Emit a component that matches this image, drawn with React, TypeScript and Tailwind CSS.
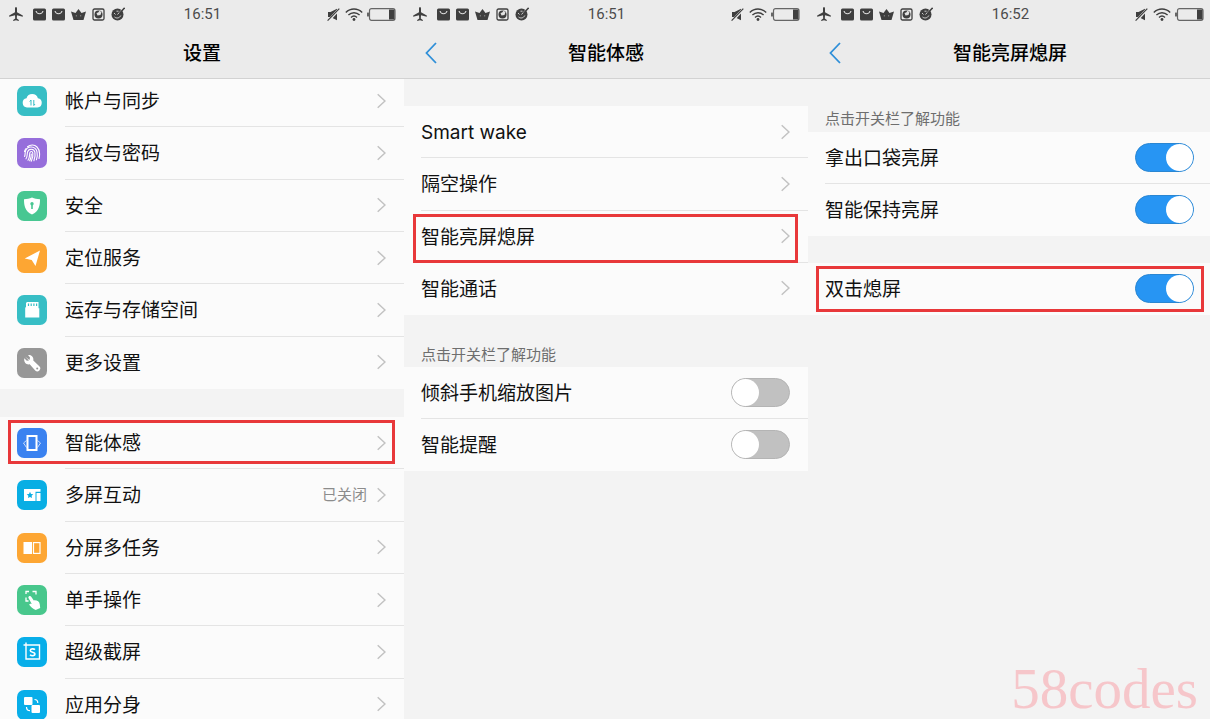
import { useId, useState, type ReactNode } from "react";
import clsx from "clsx";

/* ---------- status bar ---------- */

function BagIcon() {
  return (
    <svg className="size-[13px]" viewBox="0 0 13 13" fill="none">
      <rect x="0" y="0.5" width="13" height="12" rx="1.5" fill="#3f3f3f" />
      <path d="M3 3c.8 3.600 6.200 3.600 7 0" stroke="#ddd" strokeWidth="1.1" />
    </svg>
  );
}

function StatusBar({ time }: { time: string }) {
  return (
    <div className="grid h-7 grid-cols-[1fr_auto_1fr] items-center pr-2 pl-[9px]">
      <div className="flex items-center gap-1.5">
        <svg className="mr-1 size-3.5" viewBox="0 0 14 14" fill="#3f3f3f">
          <path d="M7 0c.7 0 1 .8 1 1.800v3.400l5.800 3.300v1.300L8 8.300l-.2 3.300 2 1.400v.9L7 13.200l-2.800.7V13l2-1.400L6 8.300.2 9.800V8.500L6 5.200V1.800C6 .8 6.300 0 7 0Z" />
        </svg>
        <BagIcon />
        <BagIcon />
        <svg className="h-[13px] w-[15px]" viewBox="0 0 15 13" fill="#3f3f3f">
          <path d="M0 3.500 4.500 5 7.500 1 10.500 5 15 3.500 12.500 12H2.500Z" />
          <path d="M5.300 7v1.500M9.700 7v1.500" stroke="#999" strokeWidth="0.8" />
        </svg>
        <svg className="size-[13px]" viewBox="0 0 13 13">
          <rect x="1" y="1" width="11" height="11" rx="1.500" fill="none" stroke="#3f3f3f" strokeWidth="1.300" />
          <circle cx="6.500" cy="6.500" r="4" fill="#3f3f3f" />
          <path d="M4.500 5 6.200 4.500 7.500 2.800 9.500 4 8.500 7 5.500 7.500Z" fill="#e2e2e2" />
        </svg>
        <svg className="size-3.5" viewBox="0 0 14 14" fill="none">
          <circle cx="6.500" cy="7.500" r="6" fill="#3f3f3f" />
          <path d="M11.500 2 6.500 7.500M3 6l1.500 1.500M3.500 10c2 1.700 5 1.200 6.300-1.500M5.500 4.200h2" stroke="#ddd" strokeWidth="0.900" />
          <path d="M13.600.8 8.500 6.500" stroke="#3f3f3f" strokeWidth="1.400" />
        </svg>
      </div>
      <time className="font-[Roboto,sans-serif] text-[15px] leading-5 text-[#4c4c4c]">{time}</time>
      <div className="flex items-center justify-end gap-1">
        <svg className="mr-px size-[13px]" viewBox="0 0 13 13">
          <path d="M1 4h2.500L10 .8v11.400L3.500 9H1Z" fill="#3f3f3f" />
          <path d="M1.200 13 12.500.8" stroke="#ebebeb" strokeWidth="2.600" />
          <path d="M.6 12.600 12.300.6" stroke="#3f3f3f" strokeWidth="1.200" />
        </svg>
        <svg className="h-[13px] w-[18px]" viewBox="0 0 18 13" fill="none" stroke="#3f3f3f" strokeWidth="1.400">
          <path d="M.8 4.500c4.700-4.600 11.700-4.600 16.400 0M3.400 7c3.300-3.100 7.900-3.100 11.200 0M6 9.500c1.700-1.600 4.300-1.600 6 0" />
          <circle cx="9" cy="11.500" r="1.400" fill="#3f3f3f" stroke="none" />
        </svg>
        <svg className="h-[13px] w-[29px]" viewBox="0 0 29 13">
          <rect x="2.500" y="0.700" width="25.500" height="11.600" rx="2" fill="none" stroke="#666" strokeWidth="1.200" />
          <rect x="0" y="4.500" width="2" height="4" rx="0.500" fill="#666" />
          <rect x="22" y="1.500" width="5.500" height="10" fill="#3f3f3f" />
        </svg>
      </div>
    </div>
  );
}

function Header({ title, time, back }: { title: string; time: string; back?: boolean }) {
  return (
    <header className="z-10 shrink-0 border-b border-[#d2d2d2] bg-[#ebebeb]">
      <StatusBar time={time} />
      <div className="grid h-[50px] grid-cols-[1fr_auto_1fr] items-center">
        <div className="flex pl-5">
          {back && (
            <button type="button" aria-label="返回" className="px-px">
              <svg className="h-[22px] w-3" viewBox="0 0 12 22" fill="none" stroke="#2f8fd8" strokeWidth="1.800">
                <path d="M11 1 1.500 11 11 21" />
              </svg>
            </button>
          )}
        </div>
        <h1 className="pt-0.5 text-[19px] leading-7 font-medium text-black">{title}</h1>
      </div>
    </header>
  );
}

/* ---------- list pieces ---------- */

function Chevron() {
  return (
    <svg className="h-4 w-[9px] shrink-0" viewBox="0 0 9 16" fill="none" stroke="#c2c2c2" strokeWidth="1.500">
      <path d="M.7 1.200 8 8 .7 14.800" />
    </svg>
  );
}

function Marker({ className }: { className: string }) {
  return <span className={clsx("pointer-events-none absolute z-10 border-3 border-[#e8383a]", className)} />;
}

interface RowProps {
  label: string;
  icon?: ReactNode;
  iconBg?: string;
  value?: string;
  marker?: string;
}

const rowClass = "group relative flex min-h-[52px] bg-[#fbfbfb] pl-[17px]";
const lineClass =
  "flex flex-1 items-center justify-between border-b border-[#e4e4e4] pr-[18px] text-left text-[19px] leading-7 text-[#111] group-last:border-transparent";

function LinkRow({ label, icon, iconBg, value, marker }: RowProps) {
  return (
    <li className={rowClass}>
      <button type="button" className="flex flex-1 items-stretch">
        {icon && (
          <span className={clsx("mr-[18px] flex size-[30px] items-center justify-center self-center rounded-[7px] text-white", iconBg)}>
            {icon}
          </span>
        )}
        <span className={lineClass}>
          <span className="pt-[3px]">{label}</span>
          <span className="flex items-center gap-2.5 text-[15px] text-[#8c8c8c]">
            {value}
            <Chevron />
          </span>
        </span>
      </button>
      {marker && <Marker className={marker} />}
    </li>
  );
}

function ToggleRow({ label, on = false, marker }: { label: string; on?: boolean; marker?: string }) {
  const id = useId();
  const [checked, setChecked] = useState(on);

  return (
    <li className={rowClass}>
      <div className={lineClass}>
        <label htmlFor={id} className="pt-[3px]">
          {label}
        </label>
        <input
          id={id}
          type="checkbox"
          role="switch"
          checked={checked}
          onChange={(e) => setChecked(e.target.checked)}
          className="flex h-[29px] w-[59px] appearance-none rounded-full border border-[#b4b4b4] bg-[#c1c1c1] before:size-[27px] before:rounded-full before:bg-white checked:justify-end checked:border-[#2a86d2] checked:bg-[#2795f3]"
        />
      </div>
      {marker && <Marker className={marker} />}
    </li>
  );
}

function SectionLabel({ children }: { children: ReactNode }) {
  return <h2 className="pt-[30px] pb-0.5 pl-[17px] text-[15px] leading-5 text-[#6e6e6e]">{children}</h2>;
}

function Screen({ title, time, back, children }: { title: string; time: string; back?: boolean; children: ReactNode }) {
  return (
    <section className="flex min-h-0 flex-col">
      <Header title={title} time={time} back={back} />
      <div className="min-h-0 flex-1 overflow-y-auto [scrollbar-width:none]">{children}</div>
    </section>
  );
}

/* ---------- settings icons ---------- */

const iconClass = "size-[30px]";

const cloudIcon = (
  <svg className={iconClass} viewBox="0 0 30 30" fill="currentColor">
    <path d="M10 21.500a4.700 4.700 0 0 1-.5-9.300 6 6 0 0 1 11.400 0 4.700 4.700 0 0 1-.4 9.300Z" />
    <path d="M14 14v5.500M16.800 19.500V14M12.700 15.500 14 14M16.800 19.500l1.200-1.500" stroke="#37bec5" strokeWidth="1" fill="none" />
  </svg>
);

const fingerprintIcon = (
  <svg className={iconClass} viewBox="0 0 30 30" fill="none" stroke="currentColor" strokeWidth="1.100" strokeLinecap="round">
    <path d="M10.500 8.700c3-2.300 7-2.200 9.500.3 1.800 1.800 2.600 4.200 2.600 7 0 1.500-.2 3-.6 4.500" />
    <path d="M7.600 18.500c.8-1.800.3-3.500.8-5.200 1.800-6 10.200-5.500 11.600.5.600 2.700.2 5.500-.6 8" />
    <path d="M9 20.800c1.600-2.300 1-4.600 1.500-6.600 1-4 6.500-4 7.400 0 .6 2.800-.1 6-1 8.600" />
    <path d="M11 22.200c1.900-2.700 1.400-5 1.800-7.200.5-2 2.700-1.900 3 0 .5 2.700-.4 5.700-1.600 8.200" />
    <path d="M14.300 16c.1 2.400-.5 4.700-1.600 6.800M7.500 13.500c.3-1.200.8-2.200 1.500-3" />
  </svg>
);

const shieldIcon = (
  <svg className={iconClass} viewBox="0 0 30 30">
    <path d="M15 6.500c2.500 1.300 5 1.700 8 1.700 0 6.500-1 12-8 15.300-7-3.300-8-8.800-8-15.300 3 0 5.500-.4 8-1.700Z" fill="currentColor" />
    <path d="M15 13v5" stroke="#48c792" strokeWidth="1.600" />
    <circle cx="15" cy="12.800" r="1.700" fill="#48c792" />
  </svg>
);

const arrowIcon = (
  <svg className={iconClass} viewBox="0 0 30 30" fill="currentColor">
    <path d="M23 7.500 18.500 23l-3.800-6-7-1.500Z" />
  </svg>
);

const cardIcon = (
  <svg className={iconClass} viewBox="0 0 30 30">
    <path d="M10 7h11.500v6.200h.8V22.500H8.200v-9.700L9 12V8Z" fill="currentColor" />
    <path d="M11.500 8.500v2.500M14.200 8.500v2.500M16.900 8.500v2.500M19.600 8.500v2.500" stroke="#37bec5" strokeWidth="1.200" />
  </svg>
);

const wrenchIcon = (
  <svg className={iconClass} viewBox="0 0 30 30">
    <path d="M8 8.500 12.500 12 13 9.500 11 7c3.500-.6 6 2 5.300 5.600l6 5.700a2.900 2.900 0 0 1-4.100 4.200l-5.500-6.200C9.500 17.200 6.500 14 7.300 10.200l2.500 2.600 2.200-.3Z" fill="currentColor" />
    <circle cx="20.200" cy="20.400" r="1" fill="#979797" />
  </svg>
);

const motionIcon = (
  <svg className={iconClass} viewBox="0 0 30 30" fill="none" stroke="currentColor">
    <rect x="10.500" y="8" width="9" height="14" strokeWidth="2" />
    <path d="M9.500 12.500 6.500 15l3 4.500M20.500 12.500l3 2.500-3 4.500" strokeWidth="1" opacity="0.700" />
  </svg>
);

const castIcon = (
  <svg className={iconClass} viewBox="0 0 30 30">
    <path d="M7 9h16.500v2.800H18.500V21H7Z" fill="currentColor" />
    <rect x="19.500" y="13" width="4" height="8" fill="currentColor" />
    <path d="m13 11.800 1 2.100 2.300.3-1.700 1.600.4 2.300-2-1.100-2 1.100.4-2.300-1.700-1.600 2.300-.3Z" fill="#08aee4" />
  </svg>
);

const splitIcon = (
  <svg className={iconClass} viewBox="0 0 30 30">
    <rect x="6.500" y="9" width="8.500" height="12" fill="currentColor" />
    <rect x="16.500" y="9.600" width="6.500" height="10.800" fill="none" stroke="currentColor" strokeWidth="1.200" />
  </svg>
);

const handIcon = (
  <svg className={iconClass} viewBox="0 0 30 30">
    <path d="M9 9V6.500h3M15.500 6.500H19V9.500M9 12.500V16h2.500" fill="none" stroke="currentColor" strokeWidth="1.300" />
    <path d="M12 11.200c1-.6 1.800-.2 2.400.7l2.400 3.500c3.200-.3 5.600 1 6 4.200l.4 3.400-4.500 2c-2.800-1.300-5-3-6.500-5.200.3-1.200 1.500-1.300 2.600-.9l-3.200-5.700c-.4-.8-.3-1.500.4-2Z" fill="currentColor" />
  </svg>
);

const shotIcon = (
  <svg className={iconClass} viewBox="0 0 30 30" fill="none" stroke="currentColor">
    <path d="M9 5.500V22h13.500V8H6.500" strokeWidth="1.400" />
    <path d="M18 12.700c-1.300-1.200-4.700-1.200-4.700.8 0 2.200 4.700 1.200 4.700 3.500 0 2-3.500 2.200-5 .7" strokeWidth="1.600" />
  </svg>
);

const cloneIcon = (
  <svg className={iconClass} viewBox="0 0 30 30">
    <rect x="7" y="7" width="8.500" height="8" rx="1" fill="currentColor" />
    <rect x="14.500" y="15" width="8.500" height="8" rx="1" fill="currentColor" />
    <path d="M17.500 9.500c2 0 3.300 1.300 3.300 3.500M9.500 17c0 2.200 1.200 3.700 3.500 3.700" fill="none" stroke="currentColor" strokeWidth="1.200" />
  </svg>
);

const general: RowProps[] = [
  { label: "帐户与同步", icon: cloudIcon, iconBg: "bg-[#37bec5]" },
  { label: "指纹与密码", icon: fingerprintIcon, iconBg: "bg-[#966edb]" },
  { label: "安全", icon: shieldIcon, iconBg: "bg-[#48c792]" },
  { label: "定位服务", icon: arrowIcon, iconBg: "bg-[#fda633]" },
  { label: "运存与存储空间", icon: cardIcon, iconBg: "bg-[#37bec5]" },
  { label: "更多设置", icon: wrenchIcon, iconBg: "bg-[#979797]" },
];

const features: RowProps[] = [
  { label: "智能体感", icon: motionIcon, iconBg: "bg-[#3a82f0]", marker: "top-[3px] right-[9px] bottom-[5px] left-2" },
  { label: "多屏互动", icon: castIcon, iconBg: "bg-[#08aee4]", value: "已关闭" },
  { label: "分屏多任务", icon: splitIcon, iconBg: "bg-[#fda633]" },
  { label: "单手操作", icon: handIcon, iconBg: "bg-[#48c78c]" },
  { label: "超级截屏", icon: shotIcon, iconBg: "bg-[#08aee9]" },
  { label: "应用分身", icon: cloneIcon, iconBg: "bg-[#08aee9]" },
];

const motion: RowProps[] = [
  { label: "Smart wake" },
  { label: "隔空操作" },
  { label: "智能亮屏熄屏", marker: "top-[3px] right-2.5 bottom-0 left-[9px]" },
  { label: "智能通话" },
];

export default function App() {
  return (
    <main className="relative h-screen overflow-hidden bg-[#f3f3f3] font-[Inter,'Noto_Sans_CJK_SC',sans-serif]">
      {/* last screen runs slightly past the right edge */}
      <div className="grid h-full w-[calc(100%+2px)] grid-cols-3 grid-rows-1">
        <Screen title="设置" time="16:51">
          <ul className="-mt-1 grid min-h-[314px] auto-rows-fr">
            {general.map((row) => (
              <LinkRow key={row.label} {...row} />
            ))}
          </ul>
          <ul className="mt-7 grid min-h-[314px] auto-rows-fr">
            {features.map((row) => (
              <LinkRow key={row.label} {...row} />
            ))}
          </ul>
        </Screen>

        <Screen title="智能体感" time="16:51" back>
          <ul className="mt-[27px] grid min-h-[209px] auto-rows-fr">
            {motion.map((row) => (
              <LinkRow key={row.label} {...row} />
            ))}
          </ul>
          <SectionLabel>点击开关栏了解功能</SectionLabel>
          <ul>
            <ToggleRow label="倾斜手机缩放图片" />
            <ToggleRow label="智能提醒" />
          </ul>
        </Screen>

        <Screen title="智能亮屏熄屏" time="16:52" back>
          <SectionLabel>点击开关栏了解功能</SectionLabel>
          <ul className="pt-px">
            <ToggleRow label="拿出口袋亮屏" on />
            <ToggleRow label="智能保持亮屏" on />
          </ul>
          <ul className="mt-[27px]">
            <ToggleRow label="双击熄屏" on marker="inset-x-2 inset-y-[3px]" />
          </ul>
        </Screen>
      </div>

      <p className="pointer-events-none absolute right-3 bottom-0 font-['Liberation_Serif',serif] text-[57px] leading-[60px] text-[#f6c6ca]">
        58codes
      </p>
    </main>
  );
}
